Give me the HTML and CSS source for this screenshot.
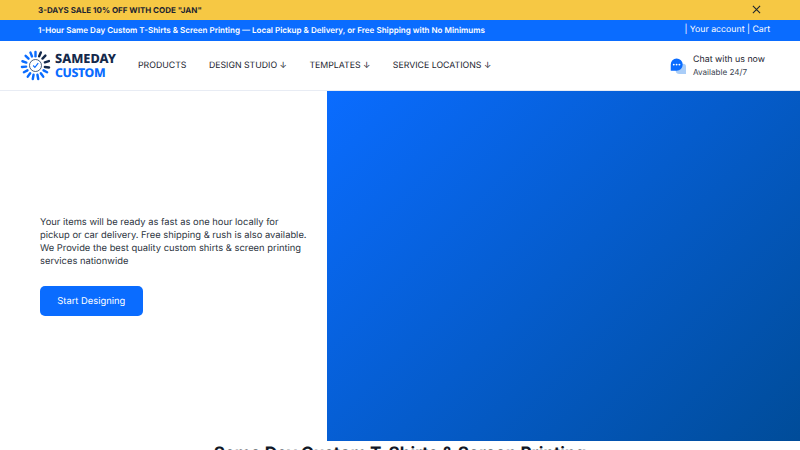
FILE: index.html
```html
<!DOCTYPE html>
<html lang="en">
<head>
<meta charset="utf-8">
<title>Sameday Custom</title>
<link rel="stylesheet" href="styles.css">
</head>
<body>
<div class="sale">
  <span>3-DAYS SALE 10% OFF WITH CODE "JAN"</span>
  <svg class="close" width="9" height="9" viewBox="0 0 10 10"><path d="M1 1l8 8M9 1L1 9" stroke="#1c2430" stroke-width="1.2" fill="none"/></svg>
</div>
<div class="promo">
  <span class="promo-text">1-Hour Same Day Custom T-Shirts &amp; Screen Printing — Local Pickup &amp; Delivery, or Free Shipping with No Minimums</span>
  <span class="account">| Your account | Cart</span>
</div>
<header class="header">
  <div class="logo">
    <svg class="mark" width="31" height="31" viewBox="-16 -16 32 32">
      <g stroke-linecap="round" stroke-width="2.5" fill="none">
        <path class="b" d="M0-9.5V-14"/>
        <path class="d" d="M3.8-9.5L5.5-13.5"/>
        <path class="d" d="M7.2-7.2L10.2-10.2"/>
        <path class="d" d="M9.7-3.3L13.8-4.6"/>
        <path class="d" d="M9.7 1.5L14 2"/>
        <path class="b" d="M8.3 5L12 7"/>
        <path class="b" d="M5.5 8L8 11.5"/>
        <path class="b" d="M2 9.5L2.8 14"/>
        <path class="b" d="M-2 9.5L-2.8 14"/>
        <path class="b" d="M-5.5 8L-8 11.5"/>
        <path class="b" d="M-8.3 5L-12 7"/>
        <path class="b" d="M-9.7 1.2L-14 1.5"/>
        <path class="b" d="M-9.5-3L-13.5-4.4"/>
        <path class="b" d="M-7.2-7L-10.2-10"/>
        <path class="b" d="M-3.6-9.3L-5.2-13.3"/>
      </g>
      <circle r="6.2" fill="none" stroke="#16335a" stroke-width=".8"/>
      <path d="M-2.4 0L-.6 2L2.8-2.4" fill="none" stroke="#0a6cff" stroke-width="1.2"/>
    </svg>
    <div class="wordmark">
      <span class="word-top">SAMEDAY</span>
      <span class="word-bottom">CUSTOM</span>
    </div>
  </div>
  <nav class="nav">
    <a>PRODUCTS</a>
    <a>DESIGN STUDIO ↓</a>
    <a>TEMPLATES ↓</a>
    <a>SERVICE LOCATIONS ↓</a>
  </nav>
  <div class="chat">
    <svg width="16" height="16" viewBox="0 0 17 17">
      <path d="M8 6h6a3 3 0 0 1 3 3v8h-7a4 4 0 0 1-4-4z" fill="#a9cdf8"/>
      <path d="M7 .5a6.5 6.5 0 0 1 0 13H.8V7A6.5 6.5 0 0 1 7 .5z" fill="#0a6cff"/>
      <circle cx="4" cy="7" r="1" fill="#fff"/><circle cx="7" cy="7" r="1" fill="#fff"/><circle cx="10" cy="7" r="1" fill="#fff"/>
    </svg>
    <div class="chat-text">
      <span class="chat-title">Chat with us now</span>
      <span class="chat-sub">Available 24/7</span>
    </div>
  </div>
</header>
<main class="hero">
  <section class="hero-left">
    <p>Your items will be ready as fast as one hour locally for pickup or car delivery. Free shipping &amp; rush is also available. We Provide the best quality custom shirts &amp; screen printing services nationwide</p>
    <a class="cta">Start Designing</a>
  </section>
  <section class="hero-right"></section>
</main>
<h1 class="title">Same Day Custom T-Shirts &amp; Screen Printing</h1>
</body>
</html>
```

FILE: styles.css
```css
* { box-sizing: border-box; }
html, body { margin: 0; height: 450px; overflow: hidden; }
body { font-family: Inter, "Liberation Sans", sans-serif; background: #fff; color: #1c2430; text-rendering: geometricPrecision; }
.sale { height: 20px; background: #f6c844; display: flex; align-items: center; justify-content: space-between; padding: 0 39px 1px 38px; font-size: 8px; font-weight: 700; color: #1c2430; }
.promo { height: 21px; background: #0a6cff; color: #fff; display: flex; align-items: center; justify-content: space-between; padding: 0 30px 1px 38px; }
.promo-text { font-size: 8.05px; font-weight: 600; }
.account { font-size: 8.75px; font-weight: 400; }
.header { height: 50px; display: flex; align-items: center; padding: 0 35px 0 20px; border-bottom: 1px solid #e8ecf4; }
.logo { display: flex; align-items: center; gap: 4px; width: 118px; }
.b { stroke: #0a6cff; }
.d { stroke: #14294b; }
.wordmark { display: flex; flex-direction: column; font-family: "Noto Sans", sans-serif; font-weight: 800; font-size: 12.75px; line-height: 13.5px; }
.word-top { color: #14294b; }
.word-bottom { color: #0a6cff; font-size: 12.25px; letter-spacing: -.35px; }
.nav { display: flex; gap: 22.5px; font-size: 8.75px; color: #1c2430; font-weight: 400; }
.chat { margin-left: auto; display: flex; align-items: center; gap: 7px; }
.chat-text { display: flex; flex-direction: column; gap: 1px; }
.chat-title { font-size: 8.85px; line-height: 12px; color: #1c2430; }
.chat-sub { font-size: 8.125px; line-height: 11px; color: #3a4350; }
.hero { height: 350px; display: flex; }
.hero-left { width: 327px; padding: 0 18px 0 40px; display: flex; flex-direction: column; justify-content: center; align-items: flex-start; }
.hero-left p { margin: 0 0 17.5px; font-size: 9.375px; line-height: 13.125px; color: #2c3440; }
.cta { width: 102.5px; height: 30px; border-radius: 5px; background: #0a6cff; color: #fff; font-size: 9.375px; display: flex; align-items: center; justify-content: center; }
.hero-right { flex: 1; background: linear-gradient(135deg, #0a6cff 0%, #004c99 100%); }
.title { margin: 3px 0 0; text-align: center; font-size: 17.1px; line-height: 20px; font-weight: 700; color: #111827; }
```
